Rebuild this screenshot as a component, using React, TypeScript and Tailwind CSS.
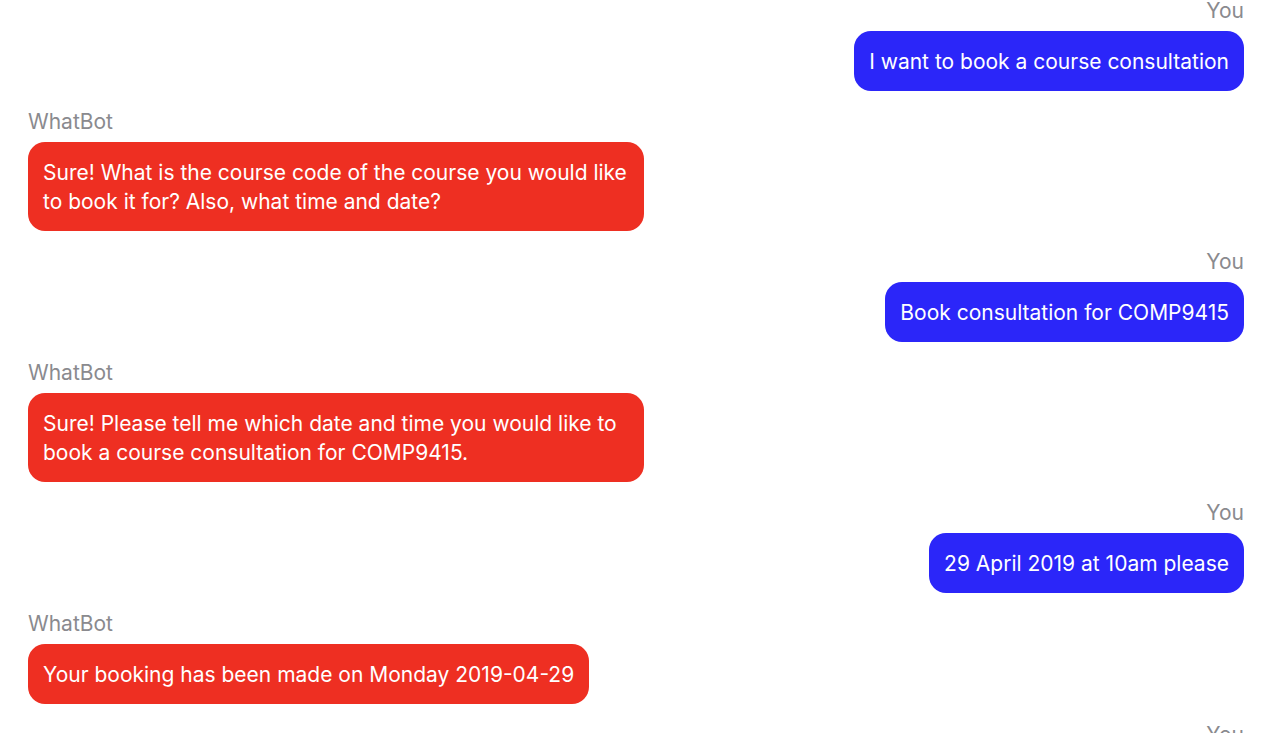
import * as React from 'react'

type Msg = { from: 'user' | 'bot'; text: string }

const messages: Msg[] = [
  { from: 'user', text: 'I want to book a course consultation' },
  { from: 'bot', text: 'Sure! What is the course code of the course you would like to book it for? Also, what time and date?' },
  { from: 'user', text: 'Book consultation for COMP9415' },
  { from: 'bot', text: 'Sure! Please tell me which date and time you would like to book a course consultation for COMP9415.' },
  { from: 'user', text: '29 April 2019 at 10am please' },
  { from: 'bot', text: 'Your booking has been made on Monday 2019-04-29' },
  { from: 'user', text: 'Thank you' },
]

const Bubble: React.FC<{ msg: Msg }> = ({ msg }) => {
  const isUser = msg.from === 'user'
  return (
    <div className={`flex flex-col ${isUser ? 'items-end' : 'items-start'}`}>
      <div className="text-[21px] leading-[22px] text-[#8a8a8e] mb-[9px]">
        {isUser ? 'You' : 'WhatBot'}
      </div>
      <div
        className={`max-w-[616px] rounded-[17px] px-[15px] pt-[16px] pb-[15px] text-[21px] leading-[29px] text-white ${
          isUser ? 'bg-[#2b26f9]' : 'bg-[#ee2f22]'
        }`}
      >
        {msg.text}
      </div>
    </div>
  )
}

export default function App() {
  return (
    <div
      className="w-[1280px] h-[733px] overflow-hidden bg-white"
      style={{ fontFamily: 'Inter, "Noto Sans", sans-serif' }}
    >
      <div className="flex flex-col gap-[20px] pl-[28px] pr-[36px]">
        {messages.map((m, i) => (
          <Bubble key={i} msg={m} />
        ))}
      </div>
    </div>
  )
}
